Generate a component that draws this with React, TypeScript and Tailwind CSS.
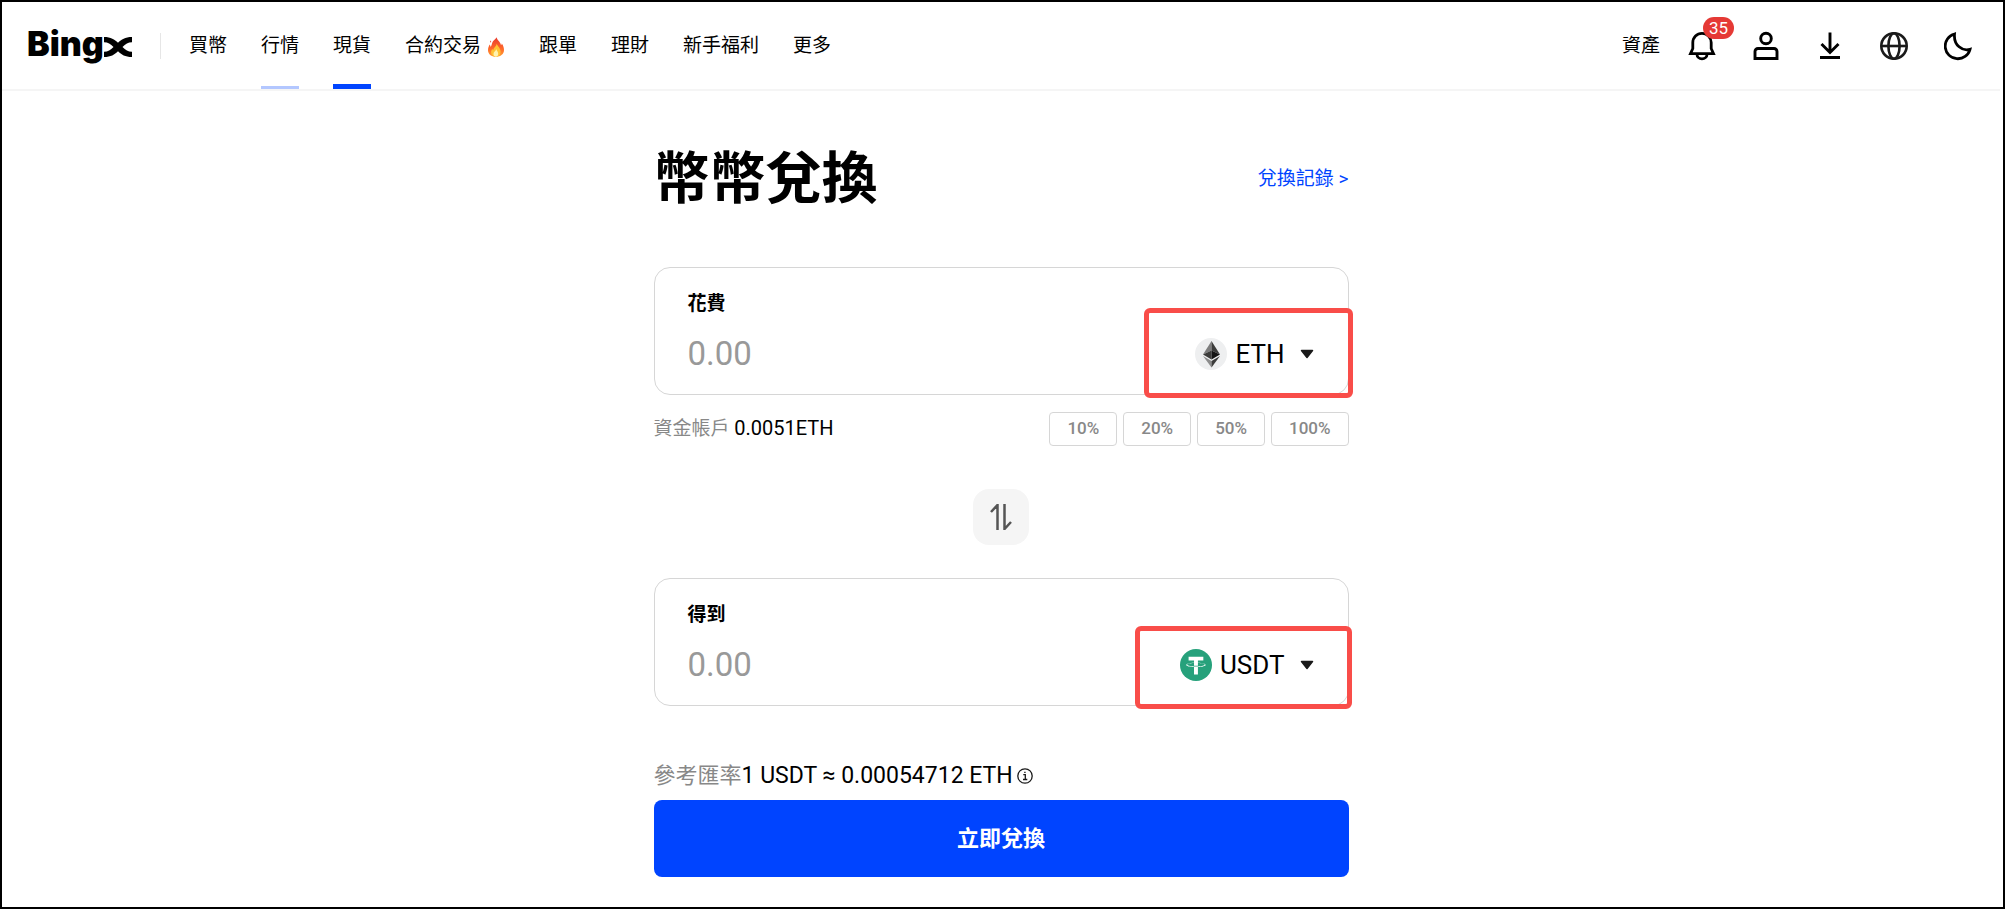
import React from 'react';

const navItems = [
  { label: '買幣' },
  { label: '行情', hovered: true },
  { label: '現貨', active: true },
  { label: '合約交易', hot: true },
  { label: '跟單' },
  { label: '理財' },
  { label: '新手福利' },
  { label: '更多' },
];

const percents = ['10%', '20%', '50%', '100%'];

const FireIcon: React.FC = () => (
  <svg viewBox="0 0 16 20" className="ml-1.5 h-5 w-[18px]" aria-hidden="true">
    <defs>
      <linearGradient id="flame" x1="0" y1="0" x2="0" y2="1">
        <stop offset="0" stopColor="#e8392b" />
        <stop offset="0.6" stopColor="#ff6a2a" />
        <stop offset="1" stopColor="#ffa033" />
      </linearGradient>
    </defs>
    <path d="M8.6 .3C9 3 12.600 5.200 13 8.200c.5-.4.8-1 .8-1.700C15.300 8.500 16 10.800 16 13c0 4-3.200 6.700-8 6.700S0 17 0 13.200C0 10.800 1 9.300 1.600 7.500c.6.800 1 1.500 1.100 2.400C4 8.300 3.600 6.500 5 4.300 6.200 2.700 8 2 8.600.3z" fill="url(#flame)" />
    <path d="M8.800 6.500c.3 2.600 3.800 4.300 3.800 8.200 0 3-2 5-4.600 5s-4.900-1.800-4.900-4.600c0-1.400.5-2.300 1.200-3.200.3.700.6 1 1.100 1.300C5.400 10.500 8.400 9.500 8.800 6.500z" fill="#ffc233" />
    <path d="M8.200 12c.2 1.500 2 2.500 2 4.700 0 1.800-1 3-2.300 3s-2.400-1.100-2.400-2.800c0-2 2.300-2.700 2.700-4.900z" fill="#fff3b0" />
    <path d="M2.600 3.400c.7.600.7 1.500.2 2.200-.7-.6-.8-1.400-.2-2.200z" fill="#e8392b" />
  </svg>
);

const BellIcon: React.FC = () => (
  <svg viewBox="0 0 28 30" className="h-[30px] w-7" fill="none" stroke="#000" strokeWidth="2.800" aria-hidden="true">
    <path d="M2.500 22.600 4.800 17.500V11.600a9.200 9.200 0 0 1 18.400 0v5.900l2.300 5.100z" />
    <path d="M9 23.500a5 4.300 0 0 0 10 0" />
  </svg>
);

const UserIcon: React.FC = () => (
  <svg viewBox="0 0 28 30" className="h-[30px] w-7" fill="none" stroke="#000" strokeWidth="2.900" aria-hidden="true">
    <circle cx="14" cy="7.500" r="5.300" />
    <path d="M3 27.500V20.500a3 3 0 0 1 3-3h16a3 3 0 0 1 3 3v7z" />
  </svg>
);

const DownloadIcon: React.FC = () => (
  <svg viewBox="0 0 28 30" className="h-[30px] w-7" fill="none" stroke="#000" strokeWidth="2.900" aria-hidden="true">
    <path d="M14 1.500v20M5.500 13 14 21.500l8.500-8.500M4 26.500h20" />
  </svg>
);

const GlobeIcon: React.FC = () => (
  <svg viewBox="0 0 28 30" className="h-[30px] w-7" fill="none" stroke="#1a1a1a" strokeWidth="2.600" aria-hidden="true">
    <circle cx="14" cy="15" r="12.700" />
    <ellipse cx="14" cy="15" rx="5.600" ry="12.700" />
    <path d="M1.200 15h25.600" />
  </svg>
);

const MoonIcon: React.FC = () => (
  <svg viewBox="0 0 28 30" className="h-[30px] w-7" fill="none" stroke="#000" strokeWidth="2.800" aria-hidden="true">
    <path d="M10.500 3A12.600 12.600 0 1 0 26 18.300C18.500 20.500 9.500 14.500 10.500 3z" />
  </svg>
);

const EthIcon: React.FC = () => (
  <svg viewBox="0 0 32 32" className="size-8 shrink-0" aria-hidden="true">
    <circle cx="16" cy="16" r="16" fill="#eeeff0" />
    <path d="M16.500 3v9.600L8 16.500z" fill="#7d7d7d" />
    <path d="M16.500 3v9.600l8.500 3.900z" fill="#3c3c3b" />
    <path d="M16.500 12.600v9L8 16.500z" fill="#3c3c3b" />
    <path d="M16.500 12.600v9l8.500-5.100z" fill="#141414" />
    <path d="M16.500 23v6.500L8 18z" fill="#8c8c8c" />
    <path d="M16.500 23v6.500L25 18z" fill="#3c3c3b" />
  </svg>
);

const UsdtIcon: React.FC = () => (
  <svg viewBox="0 0 32 32" className="size-8 shrink-0" aria-hidden="true">
    <circle cx="16" cy="16" r="16" fill="#26a17b" />
    <path d="M17.922 17.383v-.002c-.11.008-.677.042-1.942.042-1.010 0-1.721-.03-1.971-.042v.003c-3.888-.171-6.790-.848-6.790-1.658 0-.809 2.902-1.486 6.790-1.660v2.644c.254.018.982.061 1.988.061 1.207 0 1.812-.05 1.925-.06v-2.643c3.880.173 6.775.85 6.775 1.658 0 .810-2.895 1.485-6.775 1.657m0-3.590v-2.366h5.414V7.819H8.595v3.608h5.414v2.365c-4.400.202-7.709 1.074-7.709 2.118 0 1.044 3.309 1.915 7.709 2.118v7.582h3.913v-7.584c4.393-.202 7.694-1.073 7.694-2.116 0-1.043-3.301-1.914-7.694-2.117" fill="#fff" />
  </svg>
);

const Caret: React.FC = () => (
  <svg viewBox="0 0 14 10" className="h-2.5 w-3.5" aria-hidden="true">
    <path d="M1.500 1.500h11L7 8.500z" fill="#1a1a1a" stroke="#1a1a1a" strokeWidth="1.500" strokeLinejoin="round" />
  </svg>
);

type FieldProps = {
  id: string;
  label: string;
  coin: string;
  icon: React.ReactNode;
  children?: React.ReactNode;
};

const AmountField: React.FC<FieldProps> = ({ id, label, coin, icon, children }) => (
  <div className="relative rounded-2xl border border-[#d6d6d6] pt-[22px] pr-[34px] pb-4 pl-[33px]">
    <label htmlFor={id} className="block text-[19px] leading-7 font-bold">{label}</label>
    <div className="mt-3 flex h-12 items-center justify-between">
      <input
        id={id}
        type="text"
        placeholder="0.00"
        className="min-w-0 flex-1 text-[33px] leading-10 outline-none placeholder:text-[#999]"
      />
      <button type="button" className="flex items-center text-[26px] leading-8">
        {icon}
        <span className="ml-2">{coin}</span>
        <span className="ml-[15px]"><Caret /></span>
      </button>
    </div>
    {children}
  </div>
);

const App: React.FC = () => {
  return (
    <div className="min-h-screen border-2 border-black bg-white pr-[3px] pb-7 font-[Roboto,'Noto_Sans_CJK_TC',sans-serif] text-black">
      <header className="flex h-[89px] items-stretch justify-between border-b-2 border-[#f5f5f5] pr-7 pl-[25px]">
        <div className="flex items-stretch">
          <a href="#" aria-label="Bingx" className="flex items-center pb-1 font-[Inter,sans-serif] text-[34px] leading-10 font-black">
            <span>Bing</span>
            <svg viewBox="0 0 28 20" className="mt-1.5 h-5 w-7" aria-hidden="true">
              <path d="M0 0c7 0 10.500 2.500 14 5.800C17.500 2.500 21 0 28 0v5.200c-4 0-6.500 2-9.500 4.800 3 2.800 5.500 4.800 9.500 4.800V20c-7 0-10.500-2.500-14-5.800C10.500 17.500 7 20 0 20v-5.200c4 0 6.500-2 9.500-4.800C6.500 7.200 4 5.200 0 5.200z" />
            </svg>
          </a>
          <div className="ml-7 h-[26px] w-px self-center bg-[#e6e6e6]" />
          <nav className="ml-7 flex items-stretch gap-[34px] text-[19px]">
            {navItems.map((item) => (
              <a key={item.label} href="#" className="relative flex items-center pt-0.5">
                {item.label}
                {item.hot && <FireIcon />}
                {item.hovered && <span className="absolute inset-x-0 bottom-0 h-[3px] bg-[#b3c7ff]" />}
                {item.active && <span className="absolute inset-x-0 bottom-0 h-[5px] bg-[#0044ff]" />}
              </a>
            ))}
          </nav>
        </div>
        <div className="flex items-center gap-9">
          <a href="#" className="-mr-2 pt-0.5 text-[19px]">資產</a>
          <button type="button" aria-label="通知" className="relative">
            <BellIcon />
            <span className="absolute -top-3.5 left-[15px] rounded-full bg-[#e53935] px-1.5 text-[17px] leading-[22px] text-white">35</span>
          </button>
          <button type="button" aria-label="帳戶"><UserIcon /></button>
          <button type="button" aria-label="下載"><DownloadIcon /></button>
          <button type="button" aria-label="語言"><GlobeIcon /></button>
          <button type="button" aria-label="深色模式"><MoonIcon /></button>
        </div>
      </header>

      <main className="mx-auto max-w-[695px] pt-12">
        <div className="flex items-center justify-between">
          <h1 className="text-[56px] leading-20 font-bold">幣幣兌換</h1>
          <a href="#" className="text-[19px] text-[#0044ff]">兌換記錄 &gt;</a>
        </div>

        <form className="mt-12">
          <AmountField id="spend" label="花費" coin="ETH" icon={<EthIcon />}>
            <div className="pointer-events-none absolute top-10 -right-[5px] h-[90px] w-[209px] rounded-md border-[5px] border-[#f94d49]" />
          </AmountField>

          <div className="mt-[17px] flex items-center justify-between">
            <p className="text-[19px] text-[#888]">
              資金帳戶 <span className="text-xl text-black">0.0051ETH</span>
            </p>
            <div className="flex gap-1.5">
              {percents.map((p) => (
                <button key={p} type="button" className="h-[34px] rounded border border-[#d6d6d6] px-[17px] text-[17px] font-medium text-[#888]">
                  {p}
                </button>
              ))}
            </div>
          </div>

          <button type="button" aria-label="切換" className="mx-auto mt-[43px] flex size-14 items-center justify-center rounded-2xl bg-[#f5f5f5]">
            <svg viewBox="0 0 22 26" className="h-[26px] w-[22px]" fill="none" stroke="#555" strokeWidth="2.500" aria-hidden="true">
              <path d="M7.500 26V1L1 8M14.500 0v25l6.500-7" />
            </svg>
          </button>

          <div className="mt-[33px]">
            <AmountField id="receive" label="得到" coin="USDT" icon={<UsdtIcon />}>
              <div className="pointer-events-none absolute top-[47px] -right-1 h-[83px] w-[217px] rounded-md border-[5px] border-[#f94d49]" />
            </AmountField>
          </div>

          <p className="mt-[54px] flex items-center text-[22px] leading-8">
            <span className="text-[#888]">參考匯率</span>
            <span className="text-[23px]">1 USDT ≈ 0.00054712 ETH</span>
            <svg viewBox="0 0 16 16" className="ml-1 size-4" fill="none" stroke="#1a1a1a" strokeWidth="1.300" aria-hidden="true">
              <circle cx="8" cy="8" r="7.200" />
              <path d="M6.300 6.700h2v4.800M6 11.500h4.300M7.200 4.400h1.400" />
            </svg>
          </p>
          <button type="submit" className="mt-2 h-[77px] w-full rounded-lg bg-[#0044ff] text-[22px] font-bold text-white">
            立即兌換
          </button>
        </form>
      </main>
    </div>
  );
};

export default App;
